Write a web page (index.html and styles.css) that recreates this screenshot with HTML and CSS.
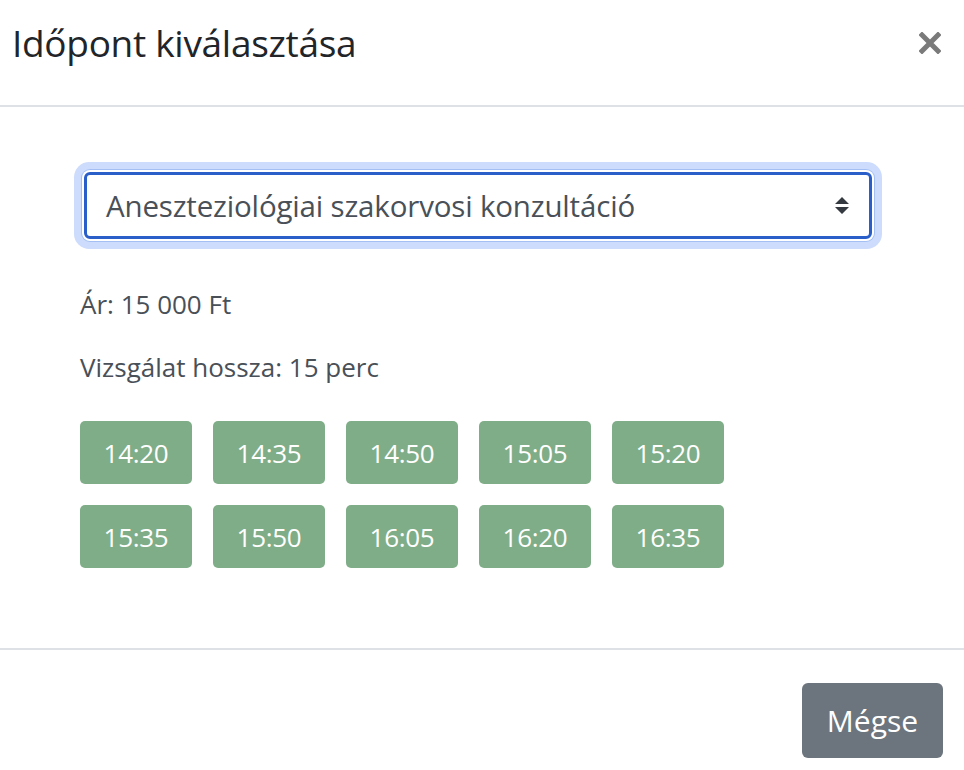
FILE: index.html
```html
<!DOCTYPE html>
<html lang="hu">
<head>
<meta charset="utf-8">
<title>Időpont kiválasztása</title>
<link rel="stylesheet" href="styles.css">
</head>
<body>
<div class="modal">
  <header class="modal-header">
    <h1 class="modal-title">Időpont kiválasztása</h1>
    <button class="close" aria-label="Bezárás">
      <svg width="22" height="22" viewBox="0 0 22 22"><path d="M3 3 L19 19 M19 3 L3 19" stroke="#7a7a7a" stroke-width="5" stroke-linecap="square"/></svg>
    </button>
  </header>
  <main class="modal-body">
    <div class="select" role="combobox" aria-expanded="false">
      <span class="select-text">Aneszteziológiai szakorvosi konzultáció</span>
      <svg class="select-arrow" width="16" height="20" viewBox="0 0 16 20"><path d="M8 1 L15 8 L1 8 Z M1 11 L15 11 L8 18 Z" fill="#343a40"/></svg>
    </div>
    <p class="info">Ár: 15 000 Ft</p>
    <p class="info">Vizsgálat hossza: 15 perc</p>
    <div class="slots">
      <button class="slot">14:20</button>
      <button class="slot">14:35</button>
      <button class="slot">14:50</button>
      <button class="slot">15:05</button>
      <button class="slot">15:20</button>
      <button class="slot">15:35</button>
      <button class="slot">15:50</button>
      <button class="slot">16:05</button>
      <button class="slot">16:20</button>
      <button class="slot">16:35</button>
    </div>
  </main>
  <footer class="modal-footer">
    <button class="btn-secondary">Mégse</button>
  </footer>
</div>
</body>
</html>
```
FILE: styles.css
```css
* { box-sizing: border-box; }
html, body { margin: 0; padding: 0; background: #fff; }
body {
  font-family: "Open Sans", "Noto Sans", sans-serif;
  color: #212529;
  width: 964px;
  height: 770px;
  overflow: hidden;
}
.modal-header {
  height: 107px;
  border-bottom: 2px solid #dee2e6;
  display: flex;
  align-items: flex-start;
  justify-content: space-between;
  padding: 0 23px 0 12px;
}
.modal-title {
  margin: 0;
  margin-top: 15px;
  font-size: 37px;
  font-weight: 400;
  line-height: 56px;
  letter-spacing: -0.3px;
}
.close {
  border: 0;
  background: none;
  padding: 0;
  margin-top: 32px;
  width: 22px;
  height: 22px;
  cursor: pointer;
}
.close svg { display: block; }
.modal-body {
  padding: 65px 80px 80px 80px;
  height: 541px;
}
.select {
  margin-left: 4px;
  width: 788px;
  height: 67px;
  border: 3px solid #2a5fc9;
  border-radius: 6px;
  box-shadow: 0 0 0 2px #fff, 0 0 0 3px #a3bff4, 0 0 0 10px #cddcfc;
  display: flex;
  align-items: center;
  justify-content: space-between;
  padding: 0 19px 0 19px;
  background: #fff;
}
.select-text {
  font-size: 29.5px;
  color: #495057;
  letter-spacing: -0.17px;
}
.select-arrow { display: block; }
.info {
  margin: 0;
  font-size: 26px;
  color: #495057;
  line-height: 30px;
  letter-spacing: 0;
}
.select + .info { margin-top: 50px; }
.info + .info { margin-top: 33px; }
.slots {
  margin-top: 39px;
  display: grid;
  grid-template-columns: repeat(5, 112px);
  gap: 21px;
}
.slot {
  height: 63px;
  border: 0;
  border-radius: 5px;
  background: #7fad88;
  color: #fff;
  font-family: inherit;
  font-size: 26px;
  letter-spacing: -0.3px;
  padding: 0;
}
.modal-footer {
  border-top: 2px solid #dee2e6;
  display: flex;
  justify-content: flex-end;
  padding: 33px 21px 0 0;
}
.btn-secondary {
  width: 141px;
  height: 75px;
  border: 0;
  border-radius: 6px;
  background: #6c757d;
  color: #fff;
  font-family: inherit;
  font-size: 30px;
  padding: 0;
}
```
